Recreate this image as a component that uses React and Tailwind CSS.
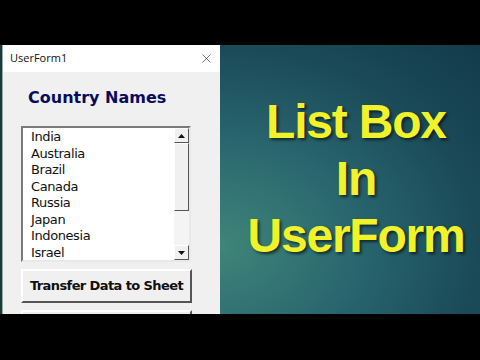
import { X } from 'lucide-react';

const countries = ['India', 'Australia', 'Brazil', 'Canada', 'Russia', 'Japan', 'Indonesia', 'Israel'];

function Arrow({ up }) {
  return (
    <svg width="7" height="4" viewBox="0 0 7 4">
      <path d={up ? 'M0 4 L3.5 0 L7 4 Z' : 'M0 0 L3.5 4 L7 0 Z'} fill="#111" />
    </svg>
  );
}

export default function App() {
  return (
    <div className="w-[480px] h-[360px] bg-black flex flex-col overflow-hidden">
      <div className="h-[45px] shrink-0" />
      <div className="h-[269px] flex shrink-0 overflow-hidden">
        <div className="w-[2px] bg-[#1d3a3a]" />
        {/* UserForm window */}
        <div className="w-[218px] flex flex-col bg-[#f0f0f0] border-l border-[#9aa] overflow-hidden">
          <div className="h-[27px] shrink-0 bg-white flex items-center justify-between pl-[7px] pr-[6px]">
            <span className="text-[11px] text-[#111]" style={{ fontFamily: '"Open Sans", sans-serif' }}>UserForm1</span>
            <X size={15} strokeWidth={1} className="text-[#222]" />
          </div>
          <div className="flex-1 flex flex-col pl-[18px]" style={{ fontFamily: '"DejaVu Sans", Verdana, sans-serif' }}>
            <div className="shrink-0 mt-[18px] ml-[7px] text-[16px] font-bold text-[#0b0b5c] leading-none">Country Names</div>
            <div className="shrink-0 mt-[20px] w-[170px] h-[136px] bg-white border-2 border-t-[#7a7a7a] border-l-[#7a7a7a] border-b-[#e8e8e8] border-r-[#e8e8e8] flex">
              <div className="flex-1 pl-[8px] pt-[1px] overflow-hidden">
                {countries.map(c => (
                  <div key={c} className="h-[16.5px] text-[13px] leading-[16.5px] text-[#111] tracking-[-0.4px]">{c}</div>
                ))}
              </div>
              <div className="w-[15px] flex flex-col bg-[#f4f4f4]">
                <div className="h-[15px] bg-[#f0f0f0] border border-b-[#555] border-r-[#555] border-t-white border-l-white flex items-center justify-center"><Arrow up /></div>
                <div className="h-[68px] bg-[#f0f0f0] border border-b-[#555] border-r-[#555] border-t-white border-l-white" />
                <div className="flex-1" />
                <div className="h-[15px] bg-[#f0f0f0] border border-b-[#555] border-r-[#555] border-t-white border-l-white flex items-center justify-center"><Arrow /></div>
              </div>
            </div>
            <div className="shrink-0 mt-[7px] w-[171px] h-[34px] bg-[#f0f0f0] border-2 border-t-white border-l-white border-b-[#555] border-r-[#555] flex items-center justify-center text-[13px] font-bold text-[#111] tracking-[-0.6px]">
              Transfer Data to Sheet
            </div>
            <div className="shrink-0 mt-[7px] w-[171px] h-[20px] border-2 border-t-white border-l-white border-r-[#555]" />
          </div>
        </div>
        {/* Title panel */}
        <div className="flex-1 flex flex-col items-center pt-[48px] pl-[12px] bg-[radial-gradient(ellipse_at_0%_75%,#3f8578_0%,#2a6870_35%,#1a4a58_70%,#133a4a_100%)]">
          <div className="text-[48px] font-bold text-[#f2f22a] leading-[57px] tracking-[-1.2px]" style={{ fontFamily: '"Liberation Sans", Arial, sans-serif', textShadow: '2px 2px 3px rgba(0,0,0,0.6)' }}>
            <div className="text-center">List Box</div>
            <div className="text-center">In</div>
            <div className="text-center">UserForm</div>
          </div>
        </div>
      </div>
    </div>
  );
}
